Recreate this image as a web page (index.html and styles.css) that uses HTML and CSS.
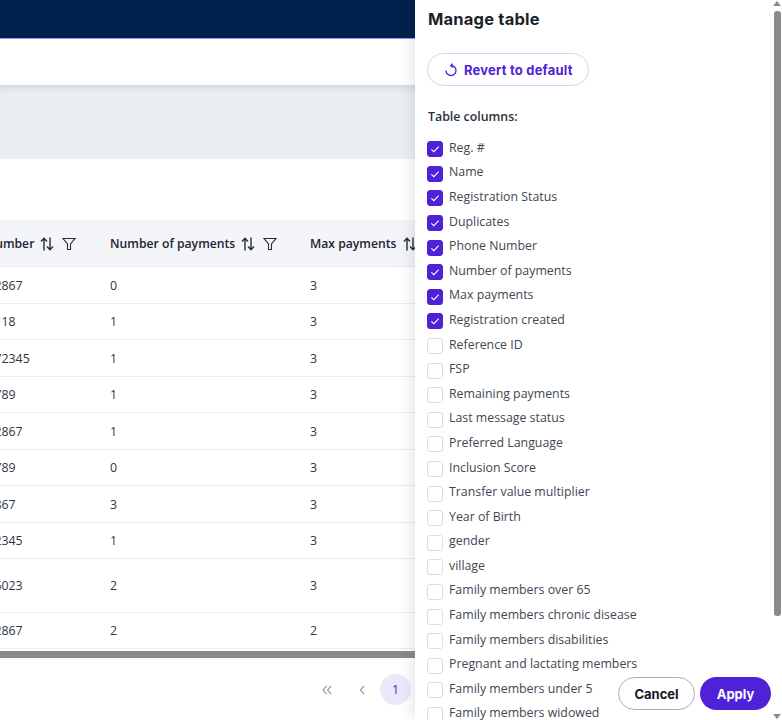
FILE: index.html
```html
<!DOCTYPE html>
<html lang="en">
<head>
    <meta charset="UTF-8">
    <meta name="viewport" content="width=device-width, initial-scale=1.0">
    <title>Manage table</title>
    <link rel="stylesheet" href="styles.css">
</head>
<body>

    <div id="page">
        <main id="main">
            <div class="topbar"></div>
            <div class="subbar"></div>
            <div class="band"></div>
            <div class="gap"></div>

            <div class="table">
                <div class="row head">
                    <div class="cell">Phone Number
                        <svg class="ico sort" viewBox="0 0 14 14"><path d="M4 13.500V1.500M1 4.500l3-3.200 3 3.200M10 .5v12M7 9.500l3 3.200 3-3.200"/></svg>
                        <svg class="ico filter" viewBox="0 0 14 14"><path d="M1 1.500h12L8.500 7v5.500h-3V7z"/></svg>
                    </div>
                    <div class="cell">Number of payments
                        <svg class="ico sort" viewBox="0 0 14 14"><path d="M4 13.500V1.500M1 4.500l3-3.200 3 3.200M10 .5v12M7 9.500l3 3.200 3-3.200"/></svg>
                        <svg class="ico filter" viewBox="0 0 14 14"><path d="M1 1.500h12L8.500 7v5.500h-3V7z"/></svg>
                    </div>
                    <div class="cell">Max payments
                        <svg class="ico sort" viewBox="0 0 14 14"><path d="M4 13.500V1.500M1 4.500l3-3.200 3 3.200M10 .5v12M7 9.500l3 3.200 3-3.200"/></svg>
                    </div>
                </div>
                <div class="row"><div class="cell">31600002867</div><div class="cell">0</div><div class="cell">3</div></div>
                <div class="row"><div class="cell">3160000118</div><div class="cell">1</div><div class="cell">3</div></div>
                <div class="row"><div class="cell">316000172345</div><div class="cell">1</div><div class="cell">3</div></div>
                <div class="row"><div class="cell">3160123789</div><div class="cell">1</div><div class="cell">3</div></div>
                <div class="row"><div class="cell">31600002867</div><div class="cell">1</div><div class="cell">3</div></div>
                <div class="row"><div class="cell">3160123789</div><div class="cell">0</div><div class="cell">3</div></div>
                <div class="row"><div class="cell">3160002867</div><div class="cell">3</div><div class="cell">3</div></div>
                <div class="row"><div class="cell">31600012345</div><div class="cell">1</div><div class="cell">3</div></div>
                <div class="row tall"><div class="cell">31600056023</div><div class="cell">2</div><div class="cell">3</div></div>
                <div class="row"><div class="cell">31600002867</div><div class="cell">2</div><div class="cell">2</div></div>
            </div>
            <div class="hscroll"></div>

            <div class="pager">
                <svg class="pg" viewBox="0 0 12 12"><path d="M5.500 2 2 6l3.500 4M10 2 6.500 6l3.500 4"/></svg>
                <svg class="pg" viewBox="0 0 12 12"><path d="M8 2 4.500 6 8 10"/></svg>
                <span class="page-num">1</span>
            </div>
        </main>

        <aside id="drawer">
            <div class="drawer-body">
                <h2>Manage table</h2>
                <button type="button" class="revert">
                    <svg viewBox="0 0 14 14"><path d="M7 2.500a5 5 0 1 1-5 5M8.700.6 6.700 2.500l2 2"/></svg>
                    Revert to default
                </button>
                <p class="cols-title">Table columns:</p>
                <ul class="cols">
                    <li><span class="box on"><svg viewBox="0 0 16 16"><path d="m3.800 8.300 2.900 2.800 5.500-5.900"/></svg></span>Reg. #</li>
                    <li><span class="box on"><svg viewBox="0 0 16 16"><path d="m3.800 8.300 2.900 2.800 5.500-5.900"/></svg></span>Name</li>
                    <li><span class="box on"><svg viewBox="0 0 16 16"><path d="m3.800 8.300 2.900 2.800 5.500-5.900"/></svg></span>Registration Status</li>
                    <li><span class="box on"><svg viewBox="0 0 16 16"><path d="m3.800 8.300 2.900 2.800 5.500-5.900"/></svg></span>Duplicates</li>
                    <li><span class="box on"><svg viewBox="0 0 16 16"><path d="m3.800 8.300 2.900 2.800 5.500-5.900"/></svg></span>Phone Number</li>
                    <li><span class="box on"><svg viewBox="0 0 16 16"><path d="m3.800 8.300 2.900 2.800 5.500-5.900"/></svg></span>Number of payments</li>
                    <li><span class="box on"><svg viewBox="0 0 16 16"><path d="m3.800 8.300 2.900 2.800 5.500-5.900"/></svg></span>Max payments</li>
                    <li><span class="box on"><svg viewBox="0 0 16 16"><path d="m3.800 8.300 2.900 2.800 5.500-5.900"/></svg></span>Registration created</li>
                    <li><span class="box"></span>Reference ID</li>
                    <li><span class="box"></span>FSP</li>
                    <li><span class="box"></span>Remaining payments</li>
                    <li><span class="box"></span>Last message status</li>
                    <li><span class="box"></span>Preferred Language</li>
                    <li><span class="box"></span>Inclusion Score</li>
                    <li><span class="box"></span>Transfer value multiplier</li>
                    <li><span class="box"></span>Year of Birth</li>
                    <li><span class="box"></span>gender</li>
                    <li><span class="box"></span>village</li>
                    <li><span class="box"></span>Family members over 65</li>
                    <li><span class="box"></span>Family members chronic disease</li>
                    <li><span class="box"></span>Family members disabilities</li>
                    <li><span class="box"></span>Pregnant and lactating members</li>
                    <li><span class="box"></span>Family members under 5</li>
                    <li><span class="box"></span>Family members widowed</li>
                </ul>
            </div>

            <div class="vscroll">
                <span class="arrow up"></span>
                <span class="thumb"></span>
                <span class="arrow down"></span>
            </div>

            <div class="actions">
                <button type="button" class="cancel">Cancel</button>
                <button type="button" class="apply">Apply</button>
            </div>
        </aside>
    </div>

</body>
</html>
```

FILE: styles.css
```css
html, body {
    margin: 0;
    height: 100%;
    overflow: hidden;
}
body {
    font-family: "Open Sans", sans-serif;
    color: #2f3540;
    background-color: white;
}
#page {
    display: flex;
    width: 782px;
    height: 720px;
    overflow: hidden;
}

/* left side, the page behind the drawer */
#main {
    width: 415px;
    flex: none;
    overflow: hidden;
}
.topbar {
    height: 39px;
    background-color: #00214d;
    border-bottom: 1px solid #a58ff0;
    box-sizing: border-box;
}
.subbar {
    height: 46px;
    background-color: white;
}
.band {
    height: 74px;
    background-color: #ebeef2;
    box-shadow: inset 0 8px 8px -6px rgba(0, 0, 0, 0.12);
}
.gap {
    height: 61px;
}
.table {
    width: 470px;
    margin-left: -55px;
    font-size: 12.35px;
}
.row {
    display: grid;
    grid-template-columns: 165px 200px 105px;
    align-items: center;
    height: 36.5px;
    padding-top: 1px;
    border-bottom: 1px solid #e9ecf3;
    box-sizing: border-box;
}
.row.head {
    height: 47px;
    padding: 0;
    background-color: #f4f5f8;
    border-top: 1px solid #eff1f5;
    border-bottom: 1px solid #e9ecf3;
    font-size: 12.2px;
    font-weight: 600;
    color: #1d2430;
}
.row.tall {
    height: 53.5px;
}
.cell {
    display: flex;
    align-items: center;
    white-space: nowrap;
}
.ico {
    width: 14px;
    height: 14px;
    fill: none;
    stroke: #262c36;
    stroke-width: 1.4;
    flex: none;
}
.sort {
    margin-left: 6px;
}
.filter {
    margin-left: 8px;
    stroke-width: 1.1;
}
.hscroll {
    height: 7px;
    margin-top: 2px;
    background-color: #8a8a8a;
}
.pager {
    display: flex;
    justify-content: flex-end;
    align-items: center;
    height: 61px;
    padding-top: 1px;
    padding-right: 4px;
}
.pg {
    width: 12px;
    height: 12px;
    fill: none;
    stroke: #9aa0aa;
    stroke-width: 1.2;
    margin-right: 23px;
}
.pg + .pg {
    margin-right: 12px;
}
.page-num {
    width: 31px;
    height: 31px;
    border-radius: 50%;
    background-color: #ece8fc;
    color: #4f22d7;
    font-size: 12.35px;
    display: flex;
    justify-content: center;
    align-items: center;
}

/* right side */
#drawer {
    position: relative;
    flex: 1;
    display: flex;
    background-color: white;
    box-shadow: 0 0 16px rgba(30, 40, 60, 0.16);
    overflow: hidden;
    clip-path: inset(0 0 0 -20px);
}
.drawer-body {
    flex: 1;
    padding: 0 0 0 12px;
    overflow: hidden;
}
h2 {
    margin: 0;
    padding-top: 9px;
    padding-left: 1px;
    font-family: Inter, sans-serif;
    font-size: 16.5px;
    line-height: 21px;
    font-weight: 700;
    letter-spacing: 0.2px;
    color: #1b1f29;
}
.revert {
    display: flex;
    align-items: center;
    gap: 6px;
    width: 162px;
    height: 33px;
    margin-top: 23px;
    padding: 0 0 0 16px;
    background-color: white;
    border: 1px solid #d8cffa;
    border-radius: 17px;
    font-family: Inter, sans-serif;
    font-size: 13px;
    font-weight: 700;
    letter-spacing: 0.2px;
    color: #4f22d7;
}
.revert svg {
    width: 14px;
    height: 14px;
    fill: none;
    stroke: #4f22d7;
    stroke-width: 1.3;
}
.cols-title {
    margin: 22px 0 0 1px;
    font-size: 12.35px;
    line-height: 18px;
    font-weight: 600;
    color: #2a303b;
}
.cols {
    list-style: none;
    margin: 9px 0 0;
    padding: 0;
    font-size: 12.35px;
    color: #414752;
}
.cols li {
    display: flex;
    align-items: center;
    gap: 6px;
    height: 24.6px;
    white-space: nowrap;
}
.box {
    width: 16px;
    height: 16px;
    margin-top: 4px;
    border: 1px solid #d5dde8;
    border-radius: 3px;
    box-sizing: border-box;
    flex: none;
    background-color: white;
}
.box.on {
    background-color: #4f22d7;
    border-color: #4f22d7;
}
.box svg {
    display: block;
    width: 14px;
    height: 14px;
    fill: none;
    stroke: white;
    stroke-width: 1.2;
}

/* the drawer's own scrollbar */
.vscroll {
    width: 10px;
    flex: none;
    display: flex;
    flex-direction: column;
    align-items: center;
}
.arrow {
    width: 0;
    height: 0;
    border-left: 4px solid transparent;
    border-right: 4px solid transparent;
}
.arrow.up {
    margin-top: 1px;
    border-bottom: 5px solid #8a8a8a;
}
.arrow.down {
    margin-top: 98px;
    border-top: 5px solid #8a8a8a;
}
.thumb {
    width: 7px;
    height: 605px;
    margin-top: 5px;
    background-color: #8a8a8a;
    border-radius: 3px;
}

/* buttons float above the list */
.actions {
    position: absolute;
    right: 11px;
    bottom: 10px;
    display: flex;
    gap: 5px;
}
.actions button {
    height: 33px;
    padding: 0;
    border-radius: 17px;
    font-family: Inter, sans-serif;
    font-size: 13px;
    font-weight: 700;
}
.cancel {
    width: 77px;
    background-color: white;
    border: 1px solid #a8b0bb;
    color: #14171f;
}
.apply {
    width: 71px;
    background-color: #4f22d7;
    border: none;
    color: white;
}
```
